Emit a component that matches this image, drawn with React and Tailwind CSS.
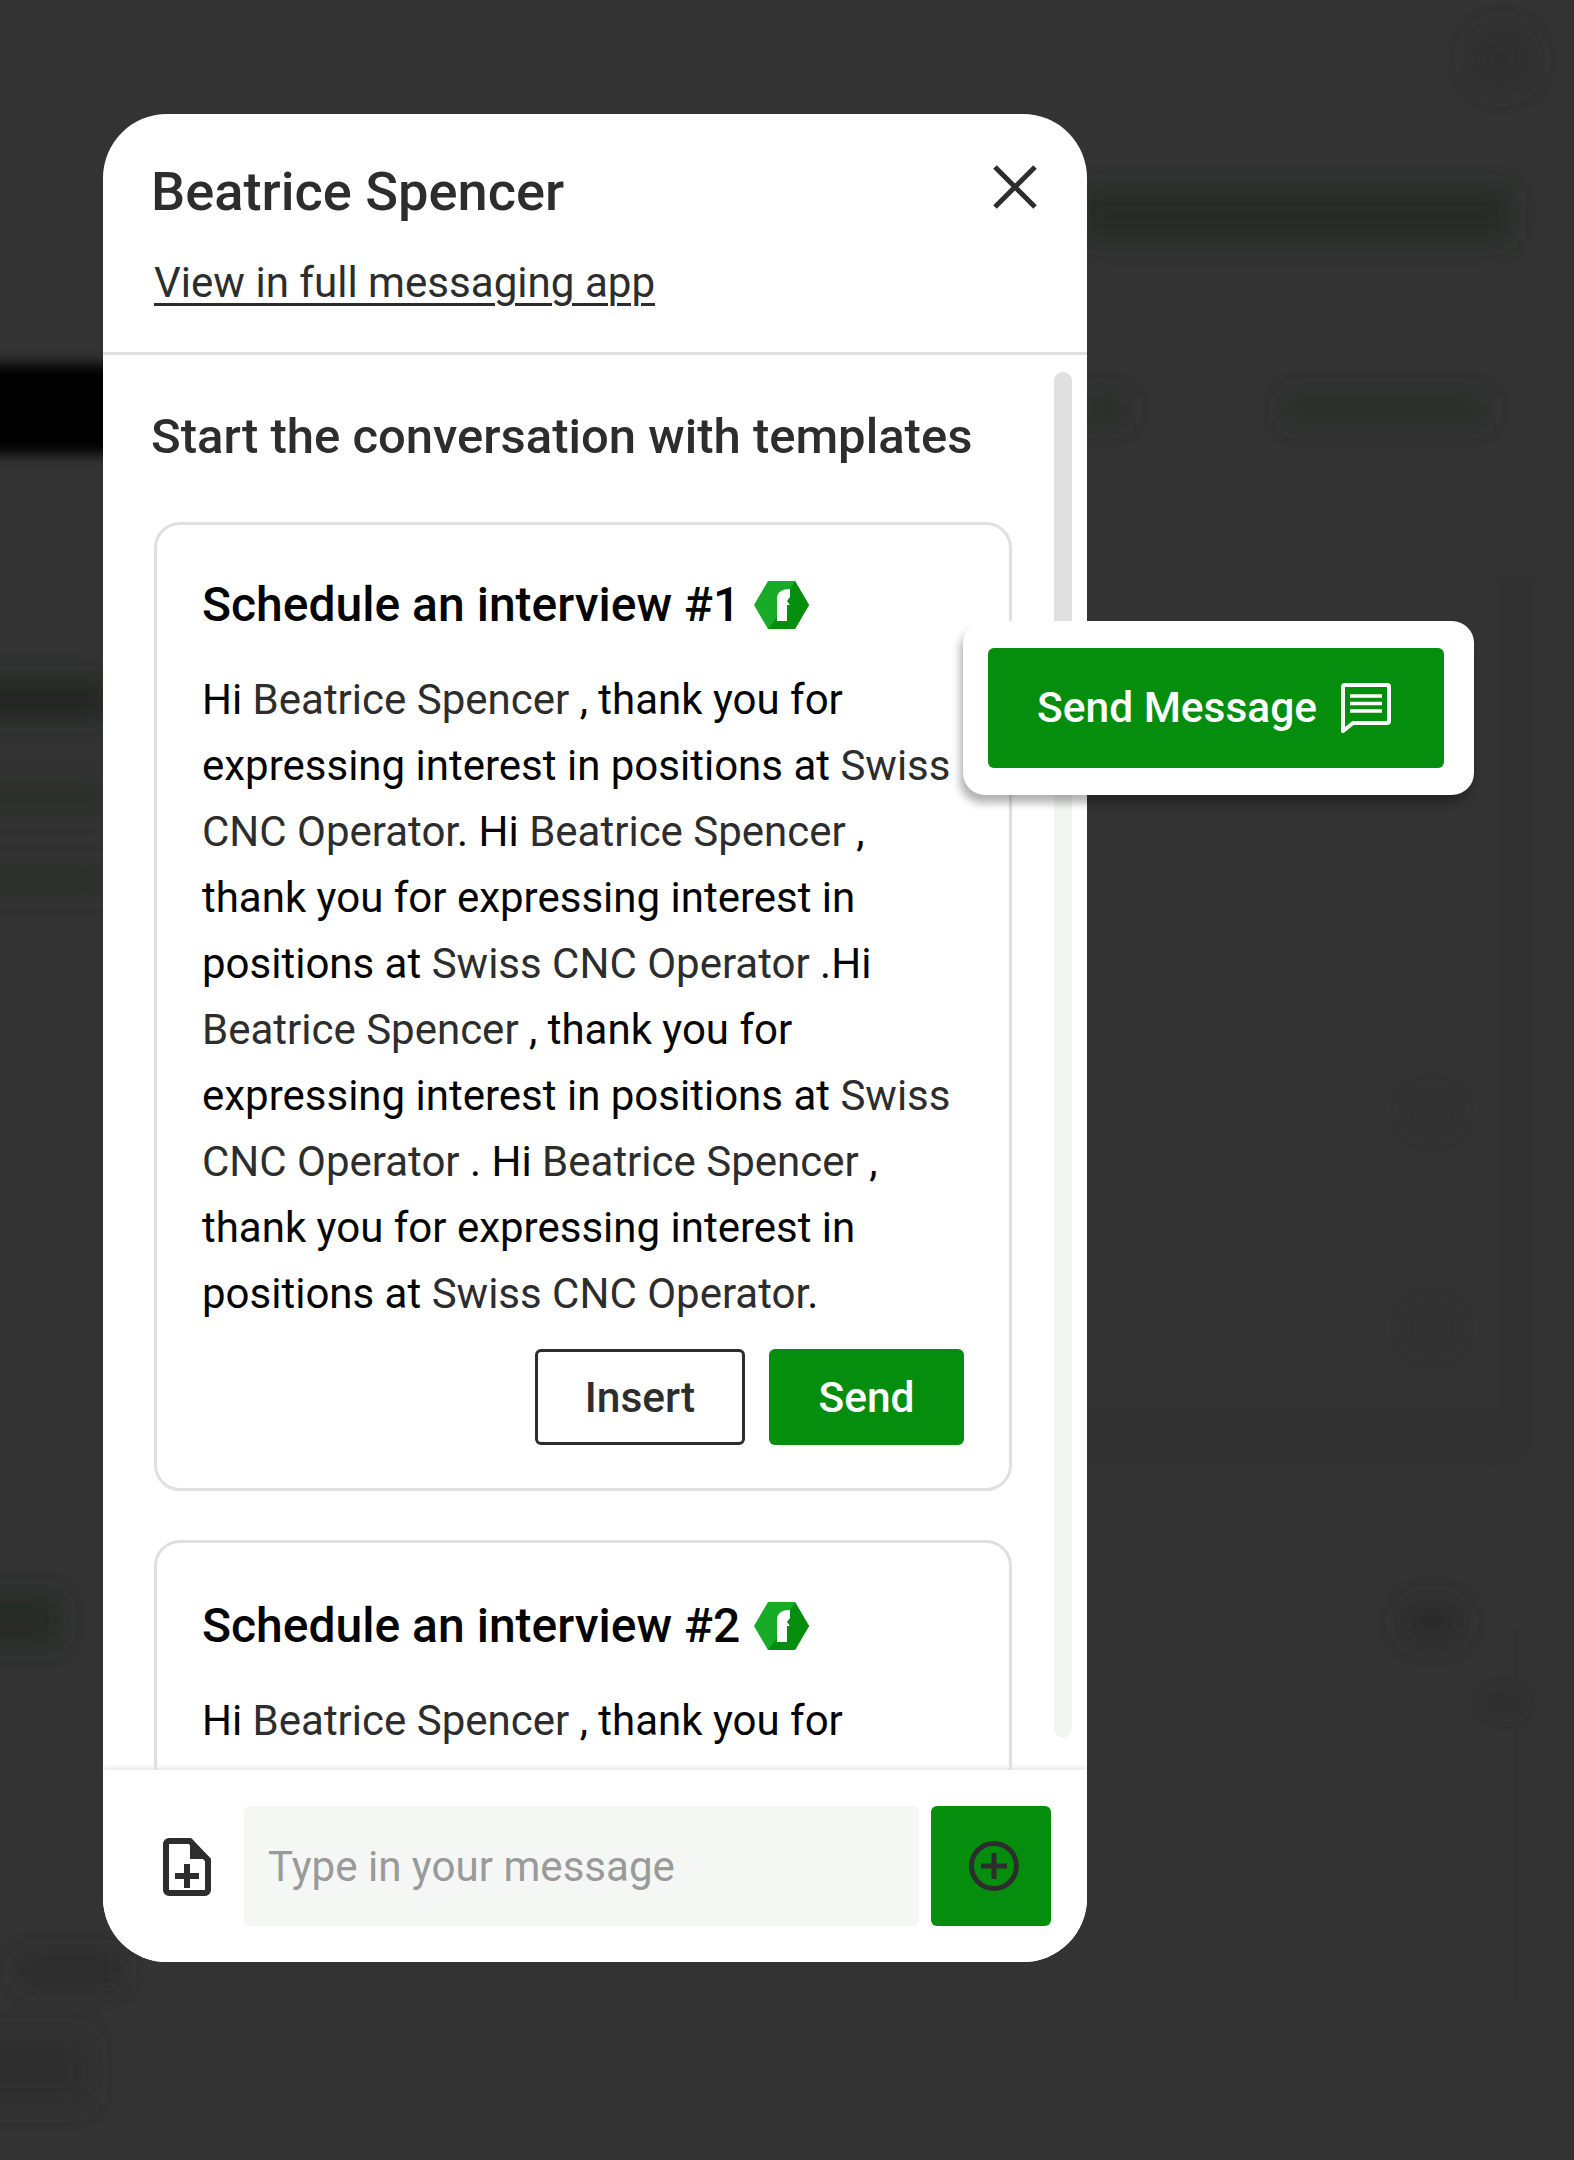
import React from 'react';

const font = { fontFamily: 'Roboto, sans-serif' };

// the little hexagon badge next to template names
const Badge = () => (
  <svg width="55" height="48" viewBox="0 0 55 48" className="ml-[14px] shrink-0">
    <polygon points="0,24 14,0 41,0 55,24 41,48 14,48" fill="#18ab27" />
    <polygon points="41,0 55,24 41,48 14,48 23,36 36,8" fill="#058d0e" />
    <path d="M23 40V18c0-7 5-10 13-10v8l-3 4 3 4h-3v16z" fill="#fff" />
  </svg>
);

const Var = ({ children }) => <span className="text-[#2d2d2d]">{children}</span>;

const TemplateBody = () => (
  <p className="w-[770px] text-[42px] leading-[66px] text-[#050505]">
    Hi <Var>Beatrice Spencer</Var> , thank you for expressing interest in positions at <Var>Swiss CNC Operator</Var>. Hi <Var>Beatrice Spencer</Var> , thank you for expressing interest in positions at <Var>Swiss CNC Operator</Var> .Hi <Var>Beatrice Spencer</Var> , thank you for expressing interest in positions at <Var>Swiss CNC Operator</Var> . Hi <Var>Beatrice Spencer</Var> , thank you for expressing interest in positions at <Var>Swiss CNC Operator</Var>.
  </p>
);

// blurred page behind the modal
const Backdrop = () => (
  <svg className="absolute inset-0" width="1574" height="2160" viewBox="0 0 1574 2160">
    <defs>
      <filter id="soft" x="-50%" y="-50%" width="200%" height="200%"><feGaussianBlur stdDeviation="12" /></filter>
      <filter id="softer" x="-50%" y="-50%" width="200%" height="200%"><feGaussianBlur stdDeviation="7" /></filter>
    </defs>
    <path d="M1500 578h32v860q0 27-40 27H1087v-53h413z" fill="#313131" />
    <g filter="url(#soft)">
      <rect x="1080" y="190" width="430" height="50" fill="#272a27" />
      <rect x="1285" y="395" width="200" height="28" fill="#2b2d2b" />
      <rect x="1080" y="395" width="45" height="28" fill="#2b2d2b" />
      <rect x="-30" y="680" width="140" height="38" fill="#242624" />
      <rect x="-30" y="785" width="140" height="26" fill="#2a2d2a" />
      <rect x="-30" y="868" width="140" height="24" fill="#2b2d2b" />
      <rect x="-30" y="1595" width="90" height="50" fill="#272a27" />
      <rect x="20" y="1955" width="100" height="30" fill="#292c29" />
      <rect x="-30" y="2035" width="120" height="70" fill="#2d2f2d" />
      <ellipse cx="1432" cy="1622" rx="32" ry="22" fill="#292c29" />
      <circle cx="1502" cy="59" r="32" fill="#2e2e2e" />
    </g>
    <g filter="url(#softer)">
      <rect x="-20" y="364" width="140" height="90" fill="#050505" />
      <ellipse cx="1432" cy="1114" rx="30" ry="26" fill="#303030" />
      <ellipse cx="1432" cy="1328" rx="30" ry="26" fill="#303030" />
      <ellipse cx="1503" cy="1703" rx="20" ry="14" fill="#2f2f2f" />
    </g>
    <path d="M1515 1630v370" stroke="#303030" strokeWidth="3" />
  </svg>
);

export default function App() {
  return (
    <div className="relative h-[2160px] overflow-hidden bg-[#333333] pt-[114px] pl-[103px]" style={font}>
      <Backdrop />

      <div className="relative flex h-[1848px] w-[984px] flex-col overflow-hidden rounded-[64px] bg-white">
        {/* header */}
        <div className="relative h-[241px] shrink-0 border-b-[3px] border-[#e0e0e0] pl-[48px]">
          <h1 className="pt-[48px] text-[54.2px] leading-[60px] font-medium text-[#2d2d2d]">Beatrice Spencer</h1>
          <a className="mt-[36px] ml-[3px] inline-block text-[42.1px] leading-[50px] text-[#2d2d2d] underline underline-offset-[6px] decoration-[3px]">View in full messaging app</a>
          <svg className="absolute right-[49px] top-[50px]" width="46" height="46" viewBox="0 0 46 46" fill="none" stroke="#2d2d2d" strokeWidth="5">
            <path d="M3 3l40 40M43 3L3 43" />
          </svg>
        </div>

        {/* templates */}
        <div className="relative min-h-0 flex-1 overflow-hidden pl-[51px]">
          <h2 className="-ml-[3px] pt-[55px] text-[49px] leading-[54px] font-medium text-[#2d2d2d]">Start the conversation with templates</h2>

          <div className="mt-[58px] w-[858px] rounded-[26px] border-[3px] border-[#e0e0e0] pt-[49px] pb-[43px] pl-[45px]">
            <div className="flex items-center">
              <h3 className="text-[48px] leading-[62px] font-medium text-[#050505]">Schedule an interview #1</h3>
              <Badge />
            </div>
            <div className="mt-[31px]"><TemplateBody /></div>
            <div className="mt-[22px] flex justify-end gap-[24px] pr-[45px]">
              <button className="h-[96px] w-[210px] rounded-[6px] border-[3px] border-[#2d2d2d] pt-[2px] text-[42.5px] font-medium text-[#2d2d2d]">Insert</button>
              <button className="h-[96px] w-[195px] rounded-[6px] bg-[#058d0e] pt-[2px] text-[42.5px] font-medium text-white">Send</button>
            </div>
          </div>

          <div className="mt-[49px] w-[858px] rounded-[26px] border-[3px] border-[#e0e0e0] pt-[52px] pl-[45px]">
            <div className="flex items-center">
              <h3 className="text-[48px] leading-[62px] font-medium text-[#050505]">Schedule an interview #2</h3>
              <Badge />
            </div>
            <div className="mt-[31px]"><TemplateBody /></div>
          </div>

          {/* scrollbar */}
          <div className="absolute right-[15px] top-[17px] h-[1366px] w-[18px] rounded-full bg-[#f3f5f3]">
            <div className="h-[400px] rounded-full bg-[#e0e0e0]" />
          </div>
        </div>

        {/* footer */}
        <div className="relative flex h-[192px] shrink-0 items-center bg-white pl-[59px] shadow-[0_-3px_4px_rgba(225,230,225,0.7)]">
          <svg width="50" height="60" viewBox="0 0 50 60" className="mt-[2px] mr-[32px] shrink-0">
            <path d="M7 4h21l18 19v30a3 3 0 0 1-3 3H7a3 3 0 0 1-3-3V7a3 3 0 0 1 3-3z" fill="none" stroke="#2d2d2d" strokeWidth="6" strokeLinejoin="round" />
            <path d="M28 2l21 20H28z" fill="#2d2d2d" />
            <path d="M25 27v24M13 39h24" stroke="#2d2d2d" strokeWidth="6" />
          </svg>
          <div className="flex h-[120px] w-[675px] items-center rounded-[6px] bg-[#f5f7f5] pt-[2px] pl-[24px] text-[42.1px] text-[#9a9a9a]">Type in your message</div>
          <div className="ml-[12px] flex h-[120px] w-[120px] items-center justify-center rounded-[6px] bg-[#058d0e] pl-[6px]">
            <svg width="50" height="50" viewBox="0 0 50 50" fill="none" stroke="#2d2d2d" strokeWidth="5">
              <circle cx="25" cy="25" r="22.5" />
              <path d="M25 12v26M12 25h26" />
            </svg>
          </div>
        </div>
      </div>

      {/* floating send button */}
      <div className="absolute left-[963px] top-[621px] flex h-[174px] w-[511px] items-center rounded-[22px] bg-white pl-[25px] shadow-[-3px_8px_8px_rgba(0,0,0,0.3)]">
        <button className="flex h-[120px] w-[456px] items-center gap-[24px] rounded-[6px] bg-[#058d0e] pl-[49px] text-[42.5px] font-medium text-white">
          Send Message
          <svg width="50" height="50" viewBox="0 0 50 50" fill="none">
            <path d="M4 2h42a2 2 0 0 1 2 2v34a2 2 0 0 1-2 2H12l-10 8V4a2 2 0 0 1 2-2z" stroke="#fff" strokeWidth="4" strokeLinejoin="round" />
            <path d="M9 13h32M9 20.500h32M9 28h32" stroke="#fff" strokeWidth="3.500" />
          </svg>
        </button>
      </div>
    </div>
  );
}
